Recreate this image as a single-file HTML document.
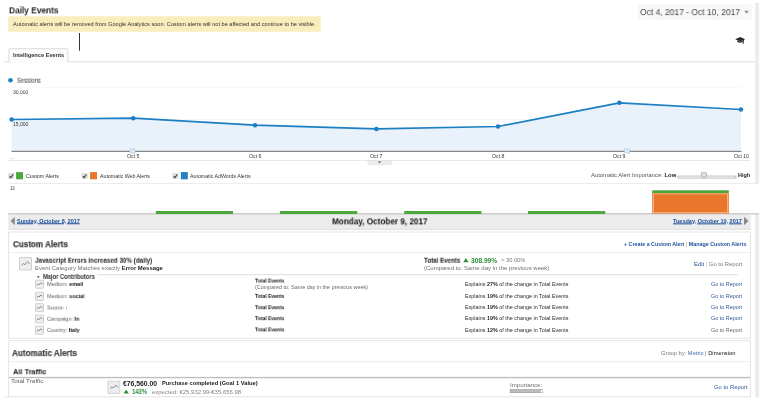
<!DOCTYPE html>
<html lang="en"><head><meta charset="utf-8"><title>Daily Events</title>
<style>
html,body{margin:0;padding:0;background:#fff;}
body{width:763px;height:402px;position:relative;overflow:hidden;font-family:"Liberation Sans", Arial, sans-serif;}
div,span.t,svg{position:absolute;}
span.t{white-space:nowrap;transform-origin:0 50%;will-change:transform;}
b{font-weight:bold;}
</style></head>
<body>
<svg style="left:0;top:0" width="763" height="402" viewBox="0 0 763 402"><rect x="755.20" y="3.00" width="3.80" height="394.30" fill="#ececec"/><rect x="8.20" y="16.20" width="312.60" height="15.50" rx="1.2" fill="#f9edbe"/><rect x="79.00" y="33.00" width="0.85" height="17.70" fill="#111"/><rect x="638.60" y="5.10" width="112.40" height="14.00" rx="1.5" fill="#f8f8f8" stroke="#ececec" stroke-width="0.6"/><path d="M744 10.8h5l-2.5 3z" fill="#999"/><svg x="735" y="36.5" width="10.6" height="7.6" viewBox="0 0 10.6 7.6" preserveAspectRatio="none"><path d="M0.2 2.7L5.2 0.5l5 2.2-5 2.2z" fill="#2b2b2b"/><path d="M2.3 3.9v1.7q2.8 1.3 5.4 0V3.9L5.2 5.1z" fill="#2b2b2b"/><path d="M8.5 3.3L8 7.2" stroke="#2b2b2b" stroke-width="1.1" fill="none"/></svg><rect x="4.00" y="61.00" width="751.00" height="1.50" fill="#e9e9e9"/><rect x="9.40" y="49.00" width="58.00" height="14.00" fill="#fcfcfc"/><path d="M8.9 62.5V49.8a1.2 1.2 0 0 1 1.2-1.2h56.6a1.2 1.2 0 0 1 1.2 1.2V62.5" fill="none" stroke="#e2e2e2" stroke-width="1.3"/><circle cx="10.5" cy="80.3" r="2.3" fill="#1c7fc3"/><rect x="11.50" y="87.10" width="729.50" height="0.70" fill="#f5f5f5"/><rect x="11.50" y="119.20" width="730.00" height="0.70" fill="#f4f4f4"/><polygon points="11.6,119.5 133.3,118.2 255,125.2 376.4,128.9 498,126.5 619.4,102.8 741,109.5 741,151 11.6,151" fill="#e9f1fa"/><polyline points="11.6,119.5 133.3,118.2 255,125.2 376.4,128.9 498,126.5 619.4,102.8 741,109.5" fill="none" stroke="#1c7fc3" stroke-width="1.75" stroke-linejoin="round"/><circle cx="11.6" cy="119.5" r="2.25" fill="#1c7fc3"/><circle cx="133.3" cy="118.2" r="2.25" fill="#1c7fc3"/><circle cx="255" cy="125.2" r="2.25" fill="#1c7fc3"/><circle cx="376.4" cy="128.9" r="2.25" fill="#1c7fc3"/><circle cx="498" cy="126.5" r="2.25" fill="#1c7fc3"/><circle cx="619.4" cy="102.8" r="2.25" fill="#1c7fc3"/><circle cx="741" cy="109.5" r="2.25" fill="#1c7fc3"/><rect x="11.50" y="150.80" width="730.00" height="1.10" fill="#777"/><path d="M133.8 152.8l1.2 1.7v-1.7z" fill="#9fc0e0"/><rect x="129.90" y="149.15" width="5.20" height="3.70" rx="1.0" fill="#fff" stroke="#8fb6da" stroke-width="0.7"/><rect x="131.00" y="150.20" width="3.00" height="0.45" fill="#a9c6e2"/><rect x="131.00" y="151.20" width="3.00" height="0.45" fill="#a9c6e2"/><path d="M628.3 152.8l1.2 1.7v-1.7z" fill="#9fc0e0"/><rect x="624.40" y="149.15" width="5.20" height="3.70" rx="1.0" fill="#fff" stroke="#8fb6da" stroke-width="0.7"/><rect x="625.50" y="150.20" width="3.00" height="0.45" fill="#a9c6e2"/><rect x="625.50" y="151.20" width="3.00" height="0.45" fill="#a9c6e2"/><rect x="8.70" y="160.20" width="741.50" height="0.80" fill="#e2e2e2"/><path d="M367.8 160.6h23.7v2.8a1.3 1.3 0 0 1-1.3 1.3h-21.1a1.3 1.3 0 0 1-1.3-1.3z" fill="#ececec" stroke="#dcdcdc" stroke-width="0.5"/><path d="M378 161.5h3.2l-1.6 1.8z" fill="#555"/><svg x="8.1" y="173.1" width="6.4" height="5.8" viewBox="0 0 12.8 11.6" preserveAspectRatio="none"><rect x="0.3" y="0.3" width="12.2" height="11" rx="2.4" fill="#dcdcdc" stroke="#cdcdcd" stroke-width="0.6"/><path d="M3 6.4l2.3 2.6 4.8-6.2" fill="none" stroke="#3a3a3a" stroke-width="2.1"/></svg><rect x="16.10" y="172.10" width="6.90" height="7.20" fill="#4aa93a"/><svg x="81.4" y="173.1" width="6.4" height="5.8" viewBox="0 0 12.8 11.6" preserveAspectRatio="none"><rect x="0.3" y="0.3" width="12.2" height="11" rx="2.4" fill="#dcdcdc" stroke="#cdcdcd" stroke-width="0.6"/><path d="M3 6.4l2.3 2.6 4.8-6.2" fill="none" stroke="#3a3a3a" stroke-width="2.1"/></svg><rect x="90.10" y="172.10" width="6.90" height="7.20" fill="#e8762b"/><svg x="172.2" y="173.1" width="6.4" height="5.8" viewBox="0 0 12.8 11.6" preserveAspectRatio="none"><rect x="0.3" y="0.3" width="12.2" height="11" rx="2.4" fill="#dcdcdc" stroke="#cdcdcd" stroke-width="0.6"/><path d="M3 6.4l2.3 2.6 4.8-6.2" fill="none" stroke="#3a3a3a" stroke-width="2.1"/></svg><rect x="180.90" y="172.10" width="6.90" height="7.20" fill="#2480c3"/><rect x="677.40" y="176.10" width="58.90" height="2.00" rx="1.3" fill="#fff" stroke="#909090" stroke-width="0.6"/><svg x="700.9" y="172.2" width="6" height="6.2" viewBox="0 0 12 12.4" preserveAspectRatio="none"><path d="M2 0.7h8a1.3 1.3 0 0 1 1.3 1.3v5L6 11.7 0.7 7V2a1.3 1.3 0 0 1 1.3-1.3z" fill="#dfdfdf" stroke="#8c8c8c" stroke-width="1.3"/></svg><rect x="750.00" y="182.90" width="13.00" height="30.50" fill="#fff"/><rect x="8.70" y="182.90" width="750.50" height="0.80" fill="#e6e6e6"/><rect x="8.30" y="213.10" width="742.40" height="16.70" fill="#ececec"/><rect x="8.30" y="213.10" width="750.90" height="1.50" fill="#cdcdcd"/><rect x="8.30" y="229.00" width="742.40" height="0.80" fill="#dcdcdc"/><path d="M14.8 217v8.2l-4.2-4.1z" fill="#8a8a8a"/><path d="M744 216.8v8.4l4.5-4.2z" fill="#8a8a8a"/><rect x="155.80" y="211.00" width="77.20" height="3.00" fill="#4aa93a"/><rect x="280.00" y="211.00" width="77.20" height="3.00" fill="#4aa93a"/><rect x="404.20" y="211.00" width="77.20" height="3.00" fill="#4aa93a"/><rect x="528.00" y="211.00" width="77.20" height="3.00" fill="#4aa93a"/><rect x="652.20" y="190.30" width="76.60" height="2.80" fill="#4aa93a"/><rect x="652.20" y="193.00" width="76.60" height="20.60" fill="#e8762b"/><rect x="653.30" y="193.90" width="74.40" height="18.60" fill="none" stroke="#fff" stroke-width="0.6" stroke-opacity="0.7"/><rect x="8.70" y="232.00" width="741.60" height="106.20" fill="#fff" stroke="#dcdcdc" stroke-width="0.8"/><rect x="9.10" y="252.10" width="741.10" height="0.80" fill="#e9e9e9"/><svg x="19" y="257.1" width="12.9" height="13.4" viewBox="0 0 12.9 13.4" preserveAspectRatio="none"><rect x="0.35" y="0.35" width="12.20" height="12.70" rx="0.9" fill="#eeeeee" stroke="#b4b4b4" stroke-width="0.7"/><polyline points="2.58,8.31 4.64,6.30 5.81,7.64 8.38,4.69 10.71,6.70" fill="none" stroke="#707070" stroke-width="0.8"/></svg><path d="M465.9 257.9l2.65 4.3h-5.3z" fill="#2c8f3a"/><rect x="97.30" y="274.40" width="640.40" height="0.70" fill="#d0d0d0"/><path d="M36.8 276.2h3l-1.5 1.9z" fill="#444"/><svg x="35.1" y="279.59999999999997" width="8.8" height="9.1" viewBox="0 0 8.8 9.1" preserveAspectRatio="none"><rect x="0.35" y="0.35" width="8.10" height="8.40" rx="0.9" fill="#eeeeee" stroke="#b4b4b4" stroke-width="0.7"/><polyline points="1.76,5.64 3.17,4.28 3.96,5.19 5.72,3.18 7.30,4.55" fill="none" stroke="#707070" stroke-width="0.8"/></svg><svg x="35.1" y="291.8" width="8.8" height="9.1" viewBox="0 0 8.8 9.1" preserveAspectRatio="none"><rect x="0.35" y="0.35" width="8.10" height="8.40" rx="0.9" fill="#eeeeee" stroke="#b4b4b4" stroke-width="0.7"/><polyline points="1.76,5.64 3.17,4.28 3.96,5.19 5.72,3.18 7.30,4.55" fill="none" stroke="#707070" stroke-width="0.8"/></svg><svg x="35.1" y="303.2" width="8.8" height="9.1" viewBox="0 0 8.8 9.1" preserveAspectRatio="none"><rect x="0.35" y="0.35" width="8.10" height="8.40" rx="0.9" fill="#eeeeee" stroke="#b4b4b4" stroke-width="0.7"/><polyline points="1.76,5.64 3.17,4.28 3.96,5.19 5.72,3.18 7.30,4.55" fill="none" stroke="#707070" stroke-width="0.8"/></svg><svg x="35.1" y="314.4" width="8.8" height="9.1" viewBox="0 0 8.8 9.1" preserveAspectRatio="none"><rect x="0.35" y="0.35" width="8.10" height="8.40" rx="0.9" fill="#eeeeee" stroke="#b4b4b4" stroke-width="0.7"/><polyline points="1.76,5.64 3.17,4.28 3.96,5.19 5.72,3.18 7.30,4.55" fill="none" stroke="#707070" stroke-width="0.8"/></svg><svg x="35.1" y="325.6" width="8.8" height="9.1" viewBox="0 0 8.8 9.1" preserveAspectRatio="none"><rect x="0.35" y="0.35" width="8.10" height="8.40" rx="0.9" fill="#eeeeee" stroke="#b4b4b4" stroke-width="0.7"/><polyline points="1.76,5.64 3.17,4.28 3.96,5.19 5.72,3.18 7.30,4.55" fill="none" stroke="#707070" stroke-width="0.8"/></svg><rect x="8.70" y="340.80" width="741.60" height="56.00" fill="#fff" stroke="#dcdcdc" stroke-width="0.8"/><rect x="9.10" y="361.30" width="741.10" height="0.80" fill="#e9e9e9"/><rect x="9.10" y="376.90" width="740.80" height="1.00" fill="#b4b4b4"/><rect x="9.10" y="377.90" width="740.80" height="0.60" fill="#dedede"/><svg x="107.4" y="380.6" width="13" height="13.2" viewBox="0 0 13 13.2" preserveAspectRatio="none"><rect x="0.35" y="0.35" width="12.30" height="12.50" rx="0.9" fill="#eeeeee" stroke="#b4b4b4" stroke-width="0.7"/><polyline points="2.60,8.18 4.68,6.20 5.85,7.52 8.45,4.62 10.79,6.60" fill="none" stroke="#707070" stroke-width="0.8"/></svg><path d="M126.2 389.6l2.6 4h-5.2z" fill="#2c8f3a"/><rect x="510.05" y="389.45" width="32.70" height="3.30" fill="#bdbdbd" stroke="#8c8c8c" stroke-width="0.5"/><rect x="540.80" y="389.80" width="1.70" height="2.60" fill="#fff"/><rect x="0.00" y="396.60" width="755.00" height="6.00" fill="#fff"/><rect x="4.00" y="396.50" width="746.80" height="0.80" fill="#e2e2e2"/></svg>
<span id="t1" class="t" style="left:8.70px;top:4px;transform:translate3d(0,0.35px,0) scaleX(0.9059);font-size:9.2px;line-height:12px;color:#222;font-weight:bold;">Daily Events</span>
<span id="t2" class="t" style="left:13.00px;top:21px;transform:translate3d(0,0.09px,0) scaleX(1.0811);font-size:5.2px;line-height:7px;color:#333;">Automatic alerts will be removed from Google Analytics soon. Custom alerts will not be affected and continue to be visible.</span>
<span id="t3" class="t" style="left:639.80px;top:7px;transform:translate3d(0,0.08px,0) scaleX(0.9873);font-size:8.6px;line-height:11px;color:#444;">Oct 4, 2017 - Oct 10, 2017</span>
<span id="t4" class="t" style="left:12.90px;top:52px;transform:translate3d(0,0.43px,0) scaleX(1.0275);font-size:5.5px;line-height:7px;color:#333;font-weight:bold;">Intelligence Events</span>
<span id="t5" class="t" style="left:17.20px;top:76px;transform:translate3d(0,0.7px,0) scaleX(0.9024);font-size:6.5px;line-height:8px;color:#333;">Sessions</span>
<span id="t6" class="t" style="left:13.00px;top:90px;transform:translate3d(0,0.41px,0) scaleX(1.0667);font-size:4.7px;line-height:6px;color:#333;">30,000</span>
<span id="t7" class="t" style="left:13.00px;top:121px;transform:translate3d(0,0.91px,0) scaleX(1.0667);font-size:4.7px;line-height:6px;color:#333;">15,000</span>
<span id="t8" class="t" style="left:9.50px;top:154px;transform:translate3d(0,0.71px,0) scaleX(1.0000);font-size:4.7px;line-height:6px;color:#555;">...</span>
<span id="t9" class="t" style="left:127.10px;top:153px;transform:translate3d(0,0.21px,0) scaleX(1.0374);font-size:5.0px;line-height:6px;color:#333;">Oct 5</span>
<span id="t10" class="t" style="left:248.80px;top:153px;transform:translate3d(0,0.21px,0) scaleX(1.0374);font-size:5.0px;line-height:6px;color:#333;">Oct 6</span>
<span id="t11" class="t" style="left:370.20px;top:153px;transform:translate3d(0,0.21px,0) scaleX(1.0374);font-size:5.0px;line-height:6px;color:#333;">Oct 7</span>
<span id="t12" class="t" style="left:491.80px;top:153px;transform:translate3d(0,0.21px,0) scaleX(1.0374);font-size:5.0px;line-height:6px;color:#333;">Oct 8</span>
<span id="t13" class="t" style="left:613.20px;top:153px;transform:translate3d(0,0.21px,0) scaleX(1.0374);font-size:5.0px;line-height:6px;color:#333;">Oct 9</span>
<span id="t14" class="t" style="left:734.00px;top:153px;transform:translate3d(0,0.21px,0) scaleX(1.0045);font-size:5.0px;line-height:6px;color:#333;">Oct 10</span>
<span id="t15" class="t" style="left:25.50px;top:173px;transform:translate3d(0,0.71px,0) scaleX(1.0803);font-size:4.9px;line-height:6px;color:#333;">Custom Alerts</span>
<span id="t16" class="t" style="left:99.60px;top:173px;transform:translate3d(0,0.71px,0) scaleX(1.0713);font-size:4.9px;line-height:6px;color:#333;">Automatic Web Alerts</span>
<span id="t17" class="t" style="left:190.20px;top:173px;transform:translate3d(0,0.71px,0) scaleX(1.0735);font-size:4.9px;line-height:6px;color:#333;">Automatic AdWords Alerts</span>
<span id="t18" class="t" style="left:591.20px;top:171px;transform:translate3d(0,0.59px,0) scaleX(1.0854);font-size:5.4px;line-height:7px;color:#555;">Automatic Alert Importance: <b style="color:#222">Low</b></span>
<span id="t19" class="t" style="left:737.80px;top:171px;transform:translate3d(0,0.64px,0) scaleX(1.0180);font-size:5.4px;line-height:7px;color:#222;font-weight:bold;">High</span>
<span id="t20" class="t" style="left:9.90px;top:186px;transform:translate3d(0,0.11px,0) scaleX(0.9389);font-size:4.7px;line-height:6px;color:#444;">10</span>
<span id="t21" class="t" style="left:17.20px;top:218px;transform:translate3d(0,0.24px,0) scaleX(1.0093);font-size:5.4px;line-height:7px;color:#1d4f9c;font-weight:bold;text-decoration:underline;text-decoration-thickness:0.5px;text-underline-offset:0.2px;">Sunday, October 8, 2017</span>
<span id="t22" class="t" style="left:331.75px;top:216px;transform:translate3d(0,0.35px,0) scaleX(0.9272);font-size:8.8px;line-height:11px;color:#151515;font-weight:bold;">Monday, October 9, 2017</span>
<span id="t23" class="t" style="left:672.50px;top:218px;transform:translate3d(0,0.34px,0) scaleX(1.0250);font-size:5.4px;line-height:7px;color:#1d4f9c;font-weight:bold;text-decoration:underline;text-decoration-thickness:0.5px;text-underline-offset:0.2px;">Tuesday, October 10, 2017</span>
<span id="t24" class="t" style="left:12.50px;top:239px;transform:translate3d(0,0.15px,0) scaleX(0.9295);font-size:8.7px;line-height:11px;color:#3e3e3e;font-weight:bold;-webkit-text-stroke:0.25px #3e3e3e;">Custom Alerts</span>
<span id="t25" class="t" style="left:624.40px;top:241px;transform:translate3d(0,0.04px,0) scaleX(1.0275);font-size:5.2px;line-height:7px;color:#1d4f9c;font-weight:bold;">+ Create a Custom Alert <span style="color:#d9b36a">|</span> Manage Custom Alerts</span>
<span id="t26" class="t" style="left:35.00px;top:256px;transform:translate3d(0,0.7px,0) scaleX(0.8845);font-size:7.1px;line-height:9px;color:#222;font-weight:bold;">Javascript Errors increased 30% (daily)</span>
<span id="t27" class="t" style="left:35.00px;top:265px;transform:translate3d(0,0.21px,0) scaleX(1.0428);font-size:5.7px;line-height:7px;color:#707070;">Event Category Matches exactly <b style="color:#222">Error Message</b></span>
<span id="t28" class="t" style="left:424.30px;top:256px;transform:translate3d(0,0.7px,0) scaleX(0.9815);font-size:6.3px;line-height:8px;color:#141414;font-weight:bold;">Total Events</span>
<span id="t29" class="t" style="left:470.60px;top:256px;transform:translate3d(0,0.7px,0) scaleX(1.0539);font-size:6.3px;line-height:8px;color:#2b8c39;font-weight:bold;">308.99%</span>
<span id="t30" class="t" style="left:501.10px;top:257px;transform:translate3d(0,0.19px,0) scaleX(1.0638);font-size:5.4px;line-height:7px;color:#777;">&gt; 30.00%</span>
<span id="t31" class="t" style="left:424.30px;top:264px;transform:translate3d(0,0.79px,0) scaleX(1.0718);font-size:5.6px;line-height:7px;color:#6e6e6e;">(Compared to: Same day in the previous week)</span>
<span id="t32" class="t" style="left:694.00px;top:260px;transform:translate3d(0,0.71px,0) scaleX(1.0266);font-size:5.7px;line-height:7px;color:#777;"><span style="color:#2a4f8f">Edit</span> <span style="color:#d9b36a">|</span> Go to Report</span>
<span id="t33" class="t" style="left:43.30px;top:272px;transform:translate3d(0,0.9px,0) scaleX(0.9140);font-size:6.3px;line-height:8px;color:#333;font-weight:bold;">Major Contributors</span>
<span id="t34" class="t" style="left:46.80px;top:280px;transform:translate3d(0,0.89px,0) scaleX(0.9671);font-size:5.6px;line-height:7px;color:#5e5e5e;">Medium: <b style="color:#111">email</b></span>
<span id="t35" class="t" style="left:255.00px;top:277px;transform:translate3d(0,0.53px,0) scaleX(0.9103);font-size:5.5px;line-height:7px;color:#111;font-weight:bold;">Total Events</span>
<span id="t36" class="t" style="left:255.00px;top:284px;transform:translate3d(0,0.39px,0) scaleX(1.0029);font-size:5.4px;line-height:7px;color:#6a6a6a;">(Compared to: Same day in the previous week)</span>
<span id="t37" class="t" style="left:464.90px;top:281px;transform:translate3d(0,0.39px,0) scaleX(1.0020);font-size:5.4px;line-height:7px;color:#2a2a2a;">Explains <b>27%</b> of the change in Total Events</span>
<span id="t38" class="t" style="left:711.40px;top:281px;transform:translate3d(0,0.49px,0) scaleX(1.0040);font-size:5.4px;line-height:7px;color:#34599a;">Go to Report</span>
<span id="t39" class="t" style="left:46.80px;top:293px;transform:translate3d(0,0.09px,0) scaleX(0.9621);font-size:5.6px;line-height:7px;color:#5e5e5e;">Medium: <b style="color:#111">social</b></span>
<span id="t40" class="t" style="left:255.00px;top:292px;transform:translate3d(0,0.93px,0) scaleX(0.9103);font-size:5.5px;line-height:7px;color:#111;font-weight:bold;">Total Events</span>
<span id="t41" class="t" style="left:464.90px;top:293px;transform:translate3d(0,0.09px,0) scaleX(1.0020);font-size:5.4px;line-height:7px;color:#2a2a2a;">Explains <b>19%</b> of the change in Total Events</span>
<span id="t42" class="t" style="left:711.40px;top:293px;transform:translate3d(0,0.19px,0) scaleX(1.0040);font-size:5.4px;line-height:7px;color:#34599a;">Go to Report</span>
<span id="t43" class="t" style="left:46.80px;top:304px;transform:translate3d(0,0.49px,0) scaleX(0.9015);font-size:5.6px;line-height:7px;color:#5e5e5e;">Source: <b style="color:#c9a27a">&#305;</b></span>
<span id="t44" class="t" style="left:255.00px;top:304px;transform:translate3d(0,0.23px,0) scaleX(0.9103);font-size:5.5px;line-height:7px;color:#111;font-weight:bold;">Total Events</span>
<span id="t45" class="t" style="left:464.90px;top:304px;transform:translate3d(0,0.39px,0) scaleX(1.0020);font-size:5.4px;line-height:7px;color:#2a2a2a;">Explains <b>19%</b> of the change in Total Events</span>
<span id="t46" class="t" style="left:711.40px;top:304px;transform:translate3d(0,0.49px,0) scaleX(1.0040);font-size:5.4px;line-height:7px;color:#34599a;">Go to Report</span>
<span id="t47" class="t" style="left:46.80px;top:315px;transform:translate3d(0,0.69px,0) scaleX(0.9585);font-size:5.6px;line-height:7px;color:#5e5e5e;">Campaign: <b style="color:#111">In</b></span>
<span id="t48" class="t" style="left:255.00px;top:315px;transform:translate3d(0,0.13px,0) scaleX(0.9103);font-size:5.5px;line-height:7px;color:#111;font-weight:bold;">Total Events</span>
<span id="t49" class="t" style="left:464.90px;top:315px;transform:translate3d(0,0.29px,0) scaleX(1.0020);font-size:5.4px;line-height:7px;color:#2a2a2a;">Explains <b>19%</b> of the change in Total Events</span>
<span id="t50" class="t" style="left:711.40px;top:315px;transform:translate3d(0,0.39px,0) scaleX(1.0040);font-size:5.4px;line-height:7px;color:#34599a;">Go to Report</span>
<span id="t51" class="t" style="left:46.80px;top:326px;transform:translate3d(0,0.89px,0) scaleX(0.9585);font-size:5.6px;line-height:7px;color:#5e5e5e;">Country: <b style="color:#111">Italy</b></span>
<span id="t52" class="t" style="left:255.00px;top:326px;transform:translate3d(0,0.43px,0) scaleX(0.9103);font-size:5.5px;line-height:7px;color:#111;font-weight:bold;">Total Events</span>
<span id="t53" class="t" style="left:464.90px;top:326px;transform:translate3d(0,0.59px,0) scaleX(1.0020);font-size:5.4px;line-height:7px;color:#2a2a2a;">Explains <b>12%</b> of the change in Total Events</span>
<span id="t54" class="t" style="left:711.40px;top:326px;transform:translate3d(0,0.69px,0) scaleX(1.0040);font-size:5.4px;line-height:7px;color:#666;">Go to Report</span>
<span id="t55" class="t" style="left:12.30px;top:347px;transform:translate3d(0,0.95px,0) scaleX(0.9393);font-size:8.7px;line-height:11px;color:#484848;font-weight:bold;-webkit-text-stroke:0.25px #484848;">Automatic Alerts</span>
<span id="t56" class="t" style="left:661.00px;top:350px;transform:translate3d(0,0.11px,0) scaleX(1.0859);font-size:5.3px;line-height:7px;color:#777;">Group by: <span style="color:#3a69ad">Metric</span> | <span style="color:#111">Dimension</span></span>
<span id="t57" class="t" style="left:12.70px;top:367px;transform:translate3d(0,0.2px,0) scaleX(0.9190);font-size:8px;line-height:10px;color:#111;font-weight:bold;">All Traffic</span>
<span id="t58" class="t" style="left:11.10px;top:378px;transform:translate3d(0,0.49px,0) scaleX(1.1795);font-size:5.4px;line-height:7px;color:#606060;">Total Traffic</span>
<span id="t59" class="t" style="left:123.10px;top:380px;transform:translate3d(0,0.1px,0) scaleX(1.0298);font-size:6.6px;line-height:8px;color:#222;font-weight:bold;">&euro;76,560.00</span>
<span id="t60" class="t" style="left:161.80px;top:380px;transform:translate3d(0,0.24px,0) scaleX(1.0092);font-size:5.7px;line-height:7px;color:#222;font-weight:bold;">Purchase completed (Goal 1 Value)</span>
<span id="t61" class="t" style="left:131.60px;top:387px;transform:translate3d(0,0.9px,0) scaleX(0.9230);font-size:6.4px;line-height:8px;color:#2b8c39;font-weight:bold;">143%</span>
<span id="t62" class="t" style="left:151.90px;top:388px;transform:translate3d(0,0.61px,0) scaleX(1.0831);font-size:5.5px;line-height:7px;color:#858585;">expected: &euro;25,932.99-&euro;35,656.98</span>
<span id="t63" class="t" style="left:509.80px;top:380px;transform:translate3d(0,0.81px,0) scaleX(1.0351);font-size:5.9px;line-height:8px;color:#6c6c6c;">Importance:</span>
<span id="t64" class="t" style="left:714.10px;top:384px;transform:translate3d(0,0.39px,0) scaleX(1.0490);font-size:5.6px;line-height:7px;color:#34599a;">Go to Report</span>
</body></html>
